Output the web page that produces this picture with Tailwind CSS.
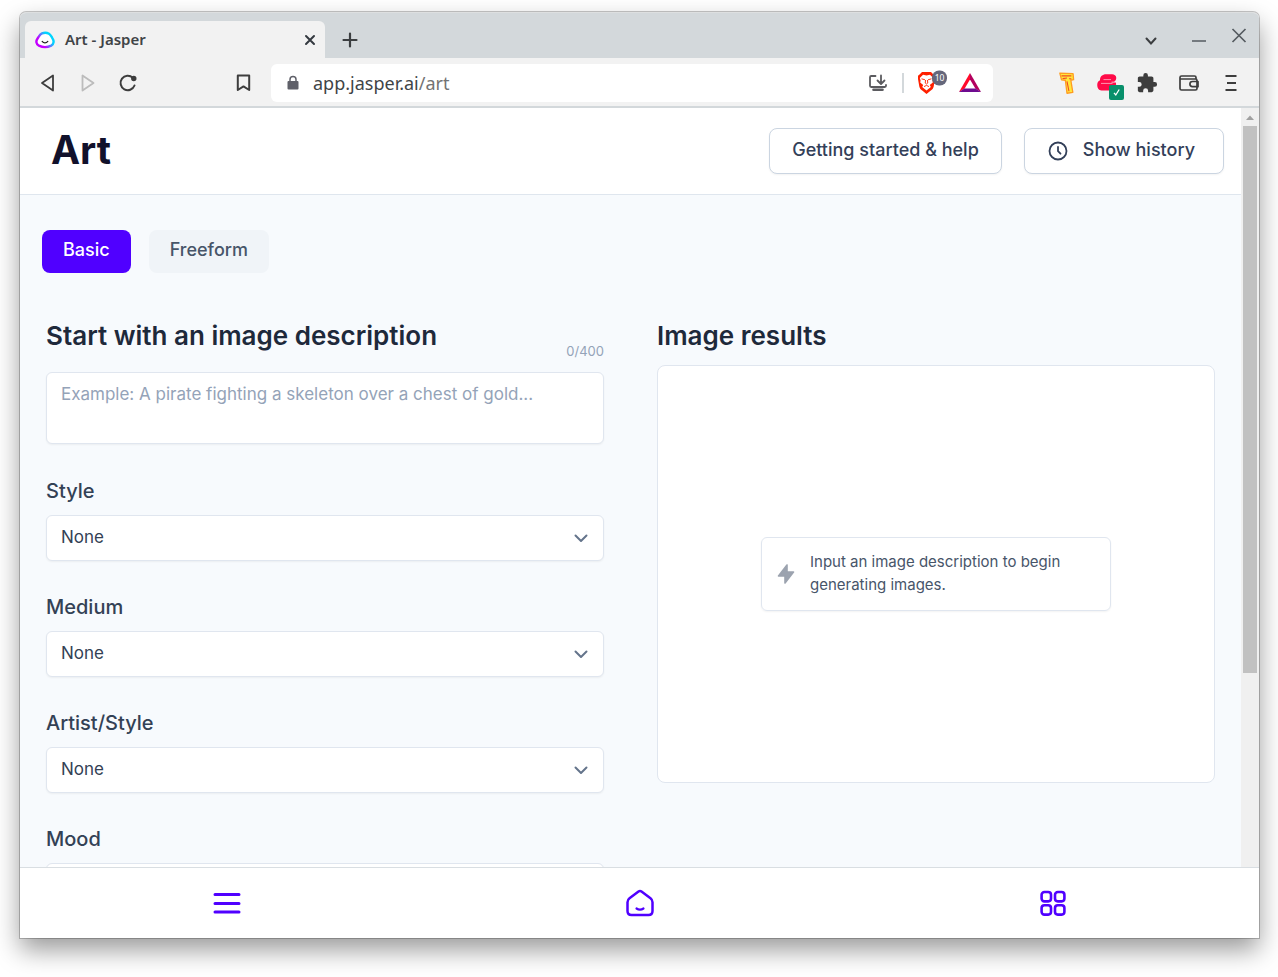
<!DOCTYPE html>
<html lang="en">
<head>
<meta charset="utf-8">
<meta name="viewport" content="width=device-width, initial-scale=1">
<title>Art - Jasper</title>
<script src="https://cdn.jsdelivr.net/npm/@tailwindcss/browser@4"></script>
</head>
<body class="bg-white font-['Inter',sans-serif]">
<div class="flex h-screen flex-col pt-3 pr-[19px] pb-[39px] pl-5">
<div class="flex min-h-0 flex-1 flex-col overflow-hidden rounded-t-md border-t border-[#dddfe0] bg-white shadow-[0_0_0_1px_rgba(0,0,0,0.22),0_12px_26px_rgba(0,0,0,0.4)]">

  <!-- Tab strip -->
  <div class="flex h-[45px] shrink-0 items-end bg-[#d3d8db] pl-[5px] font-['Noto_Sans',sans-serif]">
    <div class="flex h-[37px] w-[300px] items-center rounded-t-md bg-[#f2f2f2] pr-[7px] pl-[10px]">
      <svg class="h-5 w-5" viewBox="0 0 20 20" fill="none" aria-hidden="true">
        <defs><linearGradient id="fav" x1="2" y1="16" x2="17" y2="4" gradientUnits="userSpaceOnUse"><stop offset="0.3" stop-color="#c400ff"/><stop offset="0.55" stop-color="#5a7dff"/><stop offset="0.75" stop-color="#00d5ff"/></linearGradient></defs>
        <path d="M7 3.400C9 2.600 12 2.600 14 3.800c1.600 1 2.200 2.400 3.200 4 2 3 2 6.200-1 7.800-3.500 1.700-8.800 1.700-12.300.1C.9 14.200.700 11 2.700 8.200 4 6.300 4.800 4.400 7 3.400Z" fill="#fff" stroke="url(#fav)" stroke-width="2.400"/>
        <path d="M7.200 11.400c1.500 1.900 4 1.900 5.600 0" stroke="#222" stroke-width="1.300" stroke-linecap="round"/>
      </svg>
      <span class="ml-[10px] flex-1 text-[15px] font-semibold text-[#3f4447]">Art - Jasper</span>
      <button type="button" aria-label="Close tab" class="flex h-4 w-4 items-center justify-center text-[#343a40]">
        <svg class="h-3 w-3" viewBox="0 0 12 12" stroke="currentColor" stroke-width="2" stroke-linecap="round"><path d="M2 2l8 8M10 2l-8 8"/></svg>
      </button>
    </div>
    <button type="button" aria-label="New tab" class="flex h-[37px] w-[50px] items-center justify-center text-[#3b3e40]">
      <svg class="h-4 w-4" viewBox="0 0 16 16" stroke="currentColor" stroke-width="2.200" stroke-linecap="round"><path d="M8 1.500v13M1.500 8h13"/></svg>
    </button>
    <div class="ml-auto flex h-[45px] text-[#555b60]">
      <button type="button" aria-label="Search tabs" class="flex w-12 items-center justify-center pt-[11px] text-[#3b3e40]">
        <svg class="h-3 w-3" viewBox="0 0 12 12" fill="none" stroke="currentColor" stroke-width="2" stroke-linecap="round"><path d="M1.500 3.500L6 8.500l4.500-5"/></svg>
      </button>
      <button type="button" aria-label="Minimize" class="flex w-12 items-center justify-center pt-[11px]">
        <svg class="h-4 w-4" viewBox="0 0 16 16" stroke="currentColor" stroke-width="1.700"><path d="M1 8h14"/></svg>
      </button>
      <button type="button" aria-label="Close window" class="flex w-9 items-center justify-center pr-1">
        <svg class="h-4 w-4" viewBox="0 0 16 16" stroke="currentColor" stroke-width="1.700"><path d="M1.500 1l13 13M14.500 1l-13 13"/></svg>
      </button>
    </div>
  </div>

  <!-- Toolbar -->
  <div class="flex h-[50px] shrink-0 items-center border-b-2 border-[#d3d8db] bg-[#f2f2f2] px-2 pt-px font-['Noto_Sans',sans-serif] text-[#3d3d3d]">
    <button type="button" aria-label="Back" class="flex w-10 justify-center">
      <svg class="h-5 w-5" viewBox="0 0 20 20" fill="none" stroke="currentColor" stroke-width="1.800" stroke-linejoin="round"><path d="M15 2.500v15L4 10Z"/></svg>
    </button>
    <button type="button" aria-label="Forward" class="flex w-10 justify-center text-[#bcbcbc]">
      <svg class="h-5 w-5" viewBox="0 0 20 20" fill="none" stroke="currentColor" stroke-width="1.800" stroke-linejoin="round"><path d="M4.500 2.500v15L15.500 10Z"/></svg>
    </button>
    <button type="button" aria-label="Reload" class="flex w-10 justify-center">
      <svg class="h-5 w-5" viewBox="0 0 20 20" fill="none" stroke="currentColor" stroke-width="2" stroke-linecap="round"><path d="M14.800 4.800A7.200 7.200 0 1 0 16.500 12.500"/><circle cx="15.800" cy="5.500" r="2" fill="currentColor" stroke-width="1.400"/></svg>
    </button>
    <button type="button" aria-label="Bookmark this page" class="ml-[75px] flex w-10 justify-center">
      <svg class="h-5 w-5" viewBox="0 0 20 20" fill="none" stroke="currentColor" stroke-width="2" stroke-linejoin="round"><path d="M4.800 2.500h11.400v14.500l-5.700-3.600L4.800 17Z"/></svg>
    </button>
    <div class="ml-2 flex h-[38px] min-w-0 flex-1 items-center rounded-md bg-white pr-[11px] pl-4">
      <svg class="h-4 w-3 shrink-0" viewBox="0 0 12 16" aria-hidden="true"><rect x="0.500" y="6" width="11" height="8.500" rx="1" fill="#5f6069"/><path d="M3 7V4.500a3 3 0 0 1 6 0V7" fill="none" stroke="#5f6069" stroke-width="1.500"/></svg>
      <a href="#" class="ml-[14px] flex-1 text-[18px] leading-6 text-[#3f4447]">app.jasper.ai<span class="text-[#737373]">/art</span></a>
      <button type="button" aria-label="Install app" class="flex text-[#5b5b5f]">
        <svg class="h-5 w-5" viewBox="0 0 20 20" fill="none" stroke="currentColor" stroke-width="1.800" stroke-linecap="round" stroke-linejoin="round"><path d="M7.500 3H3.200Q2 3 2 4.200v8.600Q2 14 3.200 14h13.600q1.200 0 1.200-1.200V12"/><path d="M13 2.500v8M9.500 7.500L13 11l3.500-3.500"/><path d="M5.500 16.800h9" stroke-width="2.600"/></svg>
      </button>
      <span class="mx-[14px] h-5 w-[2px] bg-[#d3d8db]"></span>
      <button type="button" aria-label="Brave Shields" class="flex">
        <svg class="h-[26px] w-8" viewBox="0 0 32 26"><path d="M4 2h9l2.500 2.500L17.500 6l-1.800 10.500c-.4 2-1.500 3-2.900 4L8.500 24l-4.300-3.500c-1.400-1-2.500-2-2.900-4L-.5 6l2-1.500Z" fill="#ff2000"/><path d="M5 4.800l3.500.7 3.500-.7 3.200 3.200-.8 2.500.4 2-3 2.500 1 2-4.300 3.500L4.200 17l1-2-3-2.500.4-2L1.800 8Z" fill="#fff"/><path d="M3.500 8.800l3.500 1M13.500 8.800L10 9.800M7.600 10l-.4 3 1.300 1 1.300-1-.4-3M6 16.600l2.500-1.200 2.500 1.200" fill="none" stroke="#ff2000" stroke-width="0.900"/><rect x="14" y="0.500" width="15" height="15" rx="7" fill="#65677b"/><text x="21.500" y="11" text-anchor="middle" font-family="Noto Sans" font-size="8.500" fill="#fff">10</text></svg>
      </button>
      <button type="button" aria-label="Brave Rewards" class="ml-2 flex">
        <svg class="h-6 w-6" viewBox="0 0 24 24"><path d="M12 2L1 21l5.500-3.200L12 8.500Z" fill="#ff0a2c"/><path d="M12 2l11 19-5.500-3.200L12 8.500Z" fill="#b3005e"/><path d="M1 21h22l-5.500-3.500h-11Z" fill="#6e0b8f"/></svg>
      </button>
    </div>
    <div class="ml-[53px] flex items-center">
      <button type="button" aria-label="Text extension" class="flex w-[41px] justify-center">
        <svg class="h-[22px] w-[22px]" viewBox="0 0 20 20" stroke-linejoin="round"><path d="M3.500 1l12 .5L16 7l-2.500.500 1.800 11-5.300.8L8.500 7.500 5 7.200Z" fill="#ffe83b" stroke="#ff9c21" stroke-width="1.200"/><path d="M5 3.500h9M6 6l4-.5M10 8.500l1.800 9M12 6l2 .3" fill="none" stroke="#f04a28" stroke-width="1"/></svg>
      </button>
      <button type="button" aria-label="Page status extension" class="flex w-[41px] justify-center pt-2 pl-[6px]">
        <svg class="h-7 w-7" viewBox="0 0 28 28"><path d="M3 6.500C3 3.500 5.500 1.200 9 1.200h6c5 0 5.500 5.500 2 7.600H3Z" fill="#ff0b48"/><path d="M2.500 7.500h12v2h4.300q1.500 5.500-4.500 8H4.500C-.5 17.500-1 9 2.500 7.500Z" fill="#ff0b48"/><path d="M4 10.400h11.500M6.500 6.600h7.500" stroke="#fff" stroke-opacity="0.700" stroke-width="0.800"/><rect x="12" y="12" width="15" height="15" rx="2" fill="#08906b"/><path d="M17 19.800l1.800 2.200 3.400-5.500" fill="none" stroke="#fff" stroke-width="1.300"/></svg>
      </button>
      <button type="button" aria-label="Extensions" class="flex w-[41px] justify-center pr-1">
        <svg class="h-[22px] w-[22px]" viewBox="0 0 24 24" fill="currentColor"><path d="M20.500 11H19V7c0-1.100-.9-2-2-2h-4V3.500a2.500 2.500 0 0 0-5 0V5H4c-1.100 0-2 .9-2 2v3.800h1.500a2.700 2.700 0 0 1 0 5.400H2V20c0 1.100.9 2 2 2h3.800v-1.500a2.700 2.700 0 0 1 5.400 0V22H17c1.100 0 2-.9 2-2v-4h1.500a2.500 2.500 0 0 0 0-5Z"/></svg>
      </button>
      <button type="button" aria-label="Wallet" class="flex w-[41px] justify-center pr-[2px]">
        <svg class="h-5 w-5" viewBox="0 0 20 20" fill="none" stroke="currentColor" stroke-width="1.700" stroke-linejoin="round"><path d="M17 6V4.500Q17 3 15.500 3H2.500Q1 3 1 4.500v11Q1 17 2.500 17h14q1.500 0 1.500-1.500V7.500Q18 6 16.500 6H1.500"/><path d="M19 8.500h-5.500a2.600 2.600 0 0 0 0 5.200H19Z"/></svg>
      </button>
      <button type="button" aria-label="Menu" class="flex w-[41px] justify-center">
        <svg class="h-[18px] w-3" viewBox="0 0 12 18" stroke="currentColor" stroke-width="2"><path d="M0.500 2h11M2 9h9M0.500 16h11"/></svg>
      </button>
    </div>
  </div>

  <!-- Page -->
  <div class="flex min-h-0 flex-1">
    <div class="flex min-w-0 flex-1 flex-col overflow-hidden bg-[#f7fafd]">
      <header class="flex h-[87px] shrink-0 items-center justify-between border-b border-[#dfe6ee] bg-white pr-[17px] pb-px pl-[31px]">
        <h1 class="pb-[2px] text-[39px] leading-10 font-bold text-[#11112b]">Art</h1>
        <div class="flex gap-[22px] text-[18px] font-medium text-[#334059]">
          <button type="button" class="h-[46px] rounded-lg border border-[#cbd5e1] bg-white px-[22px] pb-[3px] shadow-xs">Getting started &amp; help</button>
          <button type="button" class="flex h-[46px] items-center rounded-lg border border-[#cbd5e1] bg-white pr-7 pb-[3px] pl-[22px] shadow-xs">
            <svg class="mt-[3px] mr-[14px] h-[22px] w-[22px]" viewBox="0 0 22 22" fill="none" stroke="currentColor" stroke-width="1.800" stroke-linecap="round" stroke-linejoin="round"><circle cx="11" cy="11" r="8.500"/><path d="M11 7v4.200l2.500 2.500"/></svg>
            Show history
          </button>
        </div>
      </header>

      <main class="px-[26px] pt-[35px]">
        <div class="-ml-1 flex gap-[18px] text-[18px] font-medium">
          <button type="button" class="h-[43px] rounded-lg bg-[#5000ff] px-[21px] pb-1 text-white">Basic</button>
          <button type="button" class="h-[43px] rounded-lg bg-[#f0f4f8] px-[21px] pb-1 text-[#475569]">Freeform</button>
        </div>

        <div class="mt-12 grid grid-cols-2 items-start gap-[53px]">
          <form>
            <div class="mb-3 flex h-[39px] justify-between">
              <h2 class="text-[26px] leading-[30px] font-semibold text-[#1e293b]"><label for="description">Start with an image description</label></h2>
              <span class="self-end text-[13px] leading-[18px] text-[#94a3b8]">0/400</span>
            </div>
            <textarea id="description" placeholder="Example: A pirate fighting a skeleton over a chest of gold..." class="block h-[72px] w-full resize-none rounded-md border border-[#e0e6ef] bg-white px-[14px] py-2 text-[17px] leading-[26px] text-[#334155] shadow-xs placeholder:text-[#94a3b8]"></textarea>

            <div class="mt-[33px] flex flex-col gap-8 text-[#334155]">
              <div class="flex flex-col gap-[10px]">
                <label for="style" class="text-[20px] leading-7 font-medium">Style</label>
                <div class="relative">
                  <select id="style" class="h-[46px] w-full appearance-none rounded-md border border-[#e0e6ef] bg-white px-[14px] pb-px text-[17px] shadow-xs"><option>None</option></select>
                  <svg class="pointer-events-none absolute top-4 right-4 h-[14px] w-[14px] text-[#64748b]" viewBox="0 0 14 14" fill="none" stroke="currentColor" stroke-width="2" stroke-linecap="round" stroke-linejoin="round"><path d="M1.500 4.500L7 10l5.500-5.500"/></svg>
                </div>
              </div>
              <div class="flex flex-col gap-[10px]">
                <label for="medium" class="text-[20px] leading-7 font-medium">Medium</label>
                <div class="relative">
                  <select id="medium" class="h-[46px] w-full appearance-none rounded-md border border-[#e0e6ef] bg-white px-[14px] pb-px text-[17px] shadow-xs"><option>None</option></select>
                  <svg class="pointer-events-none absolute top-4 right-4 h-[14px] w-[14px] text-[#64748b]" viewBox="0 0 14 14" fill="none" stroke="currentColor" stroke-width="2" stroke-linecap="round" stroke-linejoin="round"><path d="M1.500 4.500L7 10l5.500-5.500"/></svg>
                </div>
              </div>
              <div class="flex flex-col gap-[10px]">
                <label for="artist" class="text-[20px] leading-7 font-medium">Artist/Style</label>
                <div class="relative">
                  <select id="artist" class="h-[46px] w-full appearance-none rounded-md border border-[#e0e6ef] bg-white px-[14px] pb-px text-[17px] shadow-xs"><option>None</option></select>
                  <svg class="pointer-events-none absolute top-4 right-4 h-[14px] w-[14px] text-[#64748b]" viewBox="0 0 14 14" fill="none" stroke="currentColor" stroke-width="2" stroke-linecap="round" stroke-linejoin="round"><path d="M1.500 4.500L7 10l5.500-5.500"/></svg>
                </div>
              </div>
              <div class="flex flex-col gap-[10px]">
                <label for="mood" class="text-[20px] leading-7 font-medium">Mood</label>
                <input id="mood" type="text" class="h-[46px] w-full rounded-md border border-[#e0e6ef] bg-white px-[14px] text-[17px] shadow-xs">
              </div>
            </div>
          </form>

          <section>
            <h2 class="mb-[14px] text-[26px] leading-[30px] font-semibold text-[#1e293b]">Image results</h2>
            <div class="flex h-[418px] items-center justify-center rounded-lg border border-[#e0e6ef] bg-white">
              <div class="flex w-[350px] items-center rounded-md border border-[#e0e6ef] pt-3 pr-4 pb-[14px] pl-[15px] shadow-xs">
                <svg class="mt-[2px] mr-[15px] h-5 w-[18px] shrink-0" viewBox="0 0 18 20" fill="#9ca3af" stroke="#9ca3af" stroke-width="1.600" stroke-linejoin="round" aria-hidden="true"><path d="M10 1v7h6.500L8 19v-7H1.500Z"/></svg>
                <p class="text-[15px] leading-[23px] text-[#475569]">Input an image description to begin generating images.</p>
              </div>
            </div>
          </section>
        </div>
      </main>
    </div>

    <!-- Scroll bar -->
    <div class="flex w-[18px] shrink-0 flex-col items-center bg-[#f0f0f0]" aria-hidden="true">
      <svg class="h-[18px] w-[18px]" viewBox="0 0 18 18"><path d="M5 12l4-4.500 4 4.500Z" fill="#a0a0a0"/></svg>
      <div class="h-[547px] w-[14px] bg-[#c1c1c1]"></div>
    </div>
  </div>

  <!-- Bottom navigation -->
  <nav class="grid h-[71px] shrink-0 grid-cols-3 items-center justify-items-center border-t border-[#d9dee2] bg-white text-[#5000ff]">
    <a href="#" aria-label="Menu"><svg class="h-7 w-7" viewBox="0 0 28 28" fill="none" stroke="currentColor" stroke-width="3" stroke-linecap="round"><path d="M2 5.500h24M2 14.500h24M2 23h24"/></svg></a>
    <a href="#" aria-label="Home"><svg class="h-8 w-8" viewBox="0 0 32 32" fill="none" stroke="currentColor" stroke-width="2.500" stroke-linecap="round" stroke-linejoin="round"><path d="M14.500 4.600q1.500-1.100 3 0l9 6.700q2 1.500 2 4V24q0 4-4 4h-17q-4 0-4-4v-8.700q0-2.500 2-4Z"/><path d="M12.500 21.500q3.500 2.300 7 0" stroke-width="2.200"/></svg></a>
    <a href="#" aria-label="Apps"><svg class="h-7 w-7" viewBox="0 0 28 28" fill="none" stroke="currentColor" stroke-width="2.600"><rect x="2.600" y="3" width="9.400" height="9.400" rx="2.800"/><rect x="16" y="3" width="9.400" height="9.400" rx="2.800"/><rect x="2.600" y="16.200" width="9.400" height="9.400" rx="2.800"/><rect x="16" y="16.200" width="9.400" height="9.400" rx="2.800"/></svg></a>
  </nav>
</div>
</div>
</body>
</html>
